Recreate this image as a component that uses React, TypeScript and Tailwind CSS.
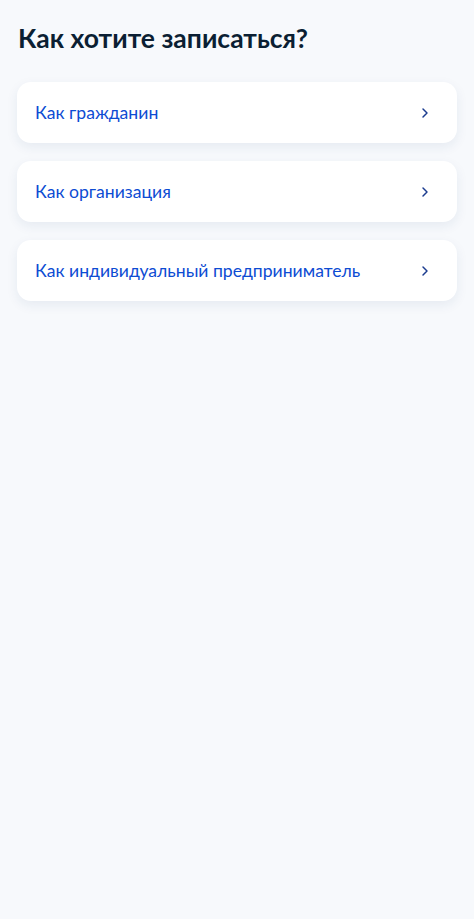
import { ChevronRight } from "lucide-react";

const options = [
  "Как гражданин",
  "Как организация",
  "Как индивидуальный предприниматель",
];

export default function App() {
  return (
    <div
      className="min-h-[919px] w-full bg-[#f7f9fc] px-[17px] pt-[21px]"
      style={{ fontFamily: "Lato, 'Noto Sans', sans-serif" }}
    >
      <h1 className="pl-[1px] text-[26.5px] font-bold leading-[34px] text-[#0b1f33]">
        Как хотите записаться?
      </h1>

      <div className="mt-[27px] flex flex-col gap-[18px]">
        {options.map((label) => (
          <button
            key={label}
            className="flex h-[61px] w-full items-center justify-between rounded-[14px] bg-white pl-[18px] pr-[24px] text-left shadow-[0_4px_12px_rgba(30,60,120,0.08)]"
          >
            <span className="text-[17.6px] leading-[22px] text-[#0d4cd3]">
              {label}
            </span>
            <ChevronRight
              className="size-[16px] text-[#1b3c8f]"
              strokeWidth={2.2}
            />
          </button>
        ))}
      </div>
    </div>
  );
}
